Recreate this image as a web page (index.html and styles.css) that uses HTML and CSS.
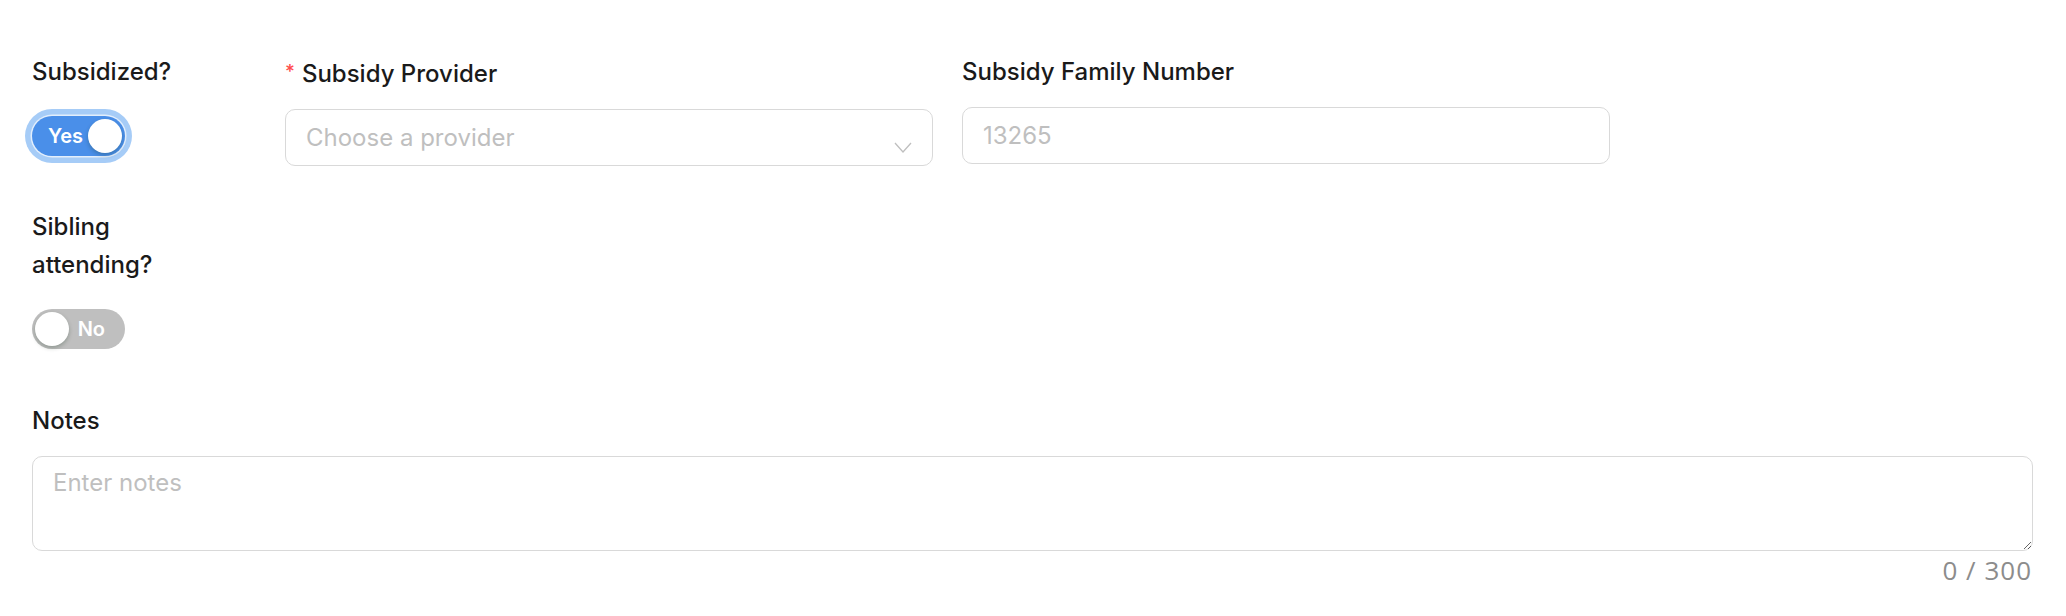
FILE: index.html
```html
<!DOCTYPE html>
<html lang="en">
<head>
<meta charset="utf-8">
<title>Subsidy form</title>
<link rel="stylesheet" href="styles.css">
</head>
<body>
<form class="form">
  <div class="row row--top">
    <div class="field field--narrow">
      <div class="label">Subsidized?</div>
      <div class="control control--switch">
        <span class="switch switch--on switch--focus">
          <span class="switch__text">Yes</span>
          <span class="switch__knob"></span>
        </span>
      </div>
    </div>
    <div class="field">
      <div class="label"><span class="required">*</span>Subsidy Provider</div>
      <div class="control select">
        <span class="select__placeholder">Choose a provider</span>
        <svg class="select__arrow" width="18" height="11" viewBox="0 0 18 11"><polyline points="1,1 9,10 17,1" fill="none" stroke="#bfbfbf" stroke-width="1.3"/></svg>
      </div>
    </div>
    <div class="field">
      <div class="label">Subsidy Family Number</div>
      <input class="control input" type="text" placeholder="13265">
    </div>
  </div>

  <div class="row row--second">
    <div class="field field--narrow">
      <div class="label">Sibling attending?</div>
      <div class="control control--switch">
        <span class="switch switch--off">
          <span class="switch__knob"></span>
          <span class="switch__text">No</span>
        </span>
      </div>
    </div>
  </div>

  <div class="field field--full">
    <div class="label">Notes</div>
    <textarea class="textarea" placeholder="Enter notes"></textarea>
    <div class="counter">0 / 300</div>
  </div>
</form>
</body>
</html>
```

FILE: styles.css
```css
html, body {
  margin: 0;
  padding: 0;
  background: #ffffff;
}

body {
  font-family: "Inter", "Open Sans", "Liberation Sans", sans-serif;
  color: #1c1c1c;
}

.form {
  padding: 53px 33px 0 32px;
  display: flex;
  flex-direction: column;
}

.row {
  display: grid;
  grid-template-columns: 224px 648px 648px;
  column-gap: 29px;
}

.row--top {
  margin-bottom: 42px;
}

.row--second {
  margin-bottom: 45px;
}

.field {
  display: flex;
  flex-direction: column;
}

.field--narrow {
  max-width: 180px;
}

.label {
  font-size: 24px;
  font-weight: 500;
  line-height: 38px;
  margin-bottom: 16px;
  color: #1a1a1a;
}

.required {
  color: #ff4d4f;
  font-size: 19px;
  margin-right: 7px;
  vertical-align: 4px;
}

.control {
  box-sizing: border-box;
  height: 57px;
}

.control--switch {
  display: flex;
  align-items: center;
}

.switch {
  box-sizing: border-box;
  width: 93px;
  height: 40px;
  border-radius: 20px;
  display: flex;
  align-items: center;
  padding: 0 3px;
}

.switch--on {
  background: #4a8fe9;
  padding-left: 16px;
  justify-content: space-between;
}

.switch--focus {
  box-shadow: 0 0 0 1.5px #e2eefc, 0 0 0 7px #a6ccf7;
}

.switch--off {
  background: #bfbfbf;
  padding-right: 20px;
  justify-content: space-between;
}

.switch__text {
  color: #ffffff;
  font-size: 20px;
  font-weight: 600;
  line-height: 1;
}

.switch__knob {
  width: 34px;
  height: 34px;
  border-radius: 50%;
  background: #ffffff;
  box-shadow: 0 2px 4px rgba(0, 35, 11, 0.25);
}

.select {
  border: 1.3px solid #d9d9d9;
  border-radius: 10px;
  display: flex;
  align-items: center;
  justify-content: space-between;
  padding: 0 20px 0 20px;
}

.select__placeholder {
  font-size: 24px;
  color: #bfbfbf;
}

.select__arrow {
  margin-top: 19px;
}

.input {
  width: 100%;
  border: 1.3px solid #d9d9d9;
  border-radius: 10px;
  padding: 0 20px;
  font-family: "Inter", "Open Sans", "Liberation Sans", sans-serif;
  font-size: 24px;
  color: #1c1c1c;
  outline: none;
  background: #ffffff;
}

.input::placeholder,
.textarea::placeholder {
  color: #bfbfbf;
}

.field--full {
  width: 100%;
}

.textarea {
  box-sizing: border-box;
  width: 100%;
  height: 95px;
  border: 1.3px solid #d9d9d9;
  border-radius: 10px;
  padding: 8px 20px;
  font-family: "Inter", "Open Sans", "Liberation Sans", sans-serif;
  font-size: 24px;
  line-height: 36px;
  color: #1c1c1c;
  outline: none;
  resize: vertical;
  display: block;
}

.counter {
  text-align: right;
  font-family: "Open Sans", "Liberation Sans", sans-serif;
  font-size: 26px;
  line-height: 39px;
  letter-spacing: 1px;
  color: #8c8c8c;
  padding-right: 1px;
}
```
